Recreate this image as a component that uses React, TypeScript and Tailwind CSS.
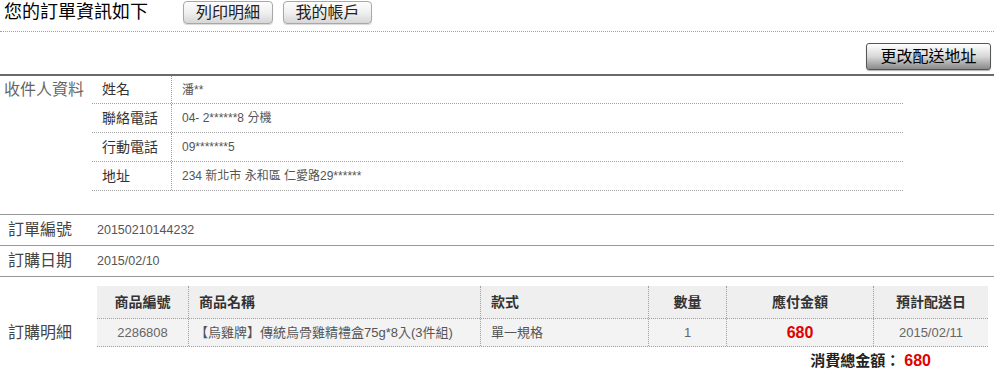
import React from "react";

const dotted = "border-dotted border-[#a0a0a0]";

function GrayButton({ children, className = "" }: { children: React.ReactNode; className?: string }) {
  return (
    <button
      className={
        "flex items-center justify-center rounded-[4px] border border-[#a8a8a8] bg-gradient-to-b from-[#fdfdfd] via-[#f0f0f0] to-[#d6d6d6] text-[#222] shadow-[0_1px_1px_rgba(0,0,0,0.15)] " +
        className
      }
    >
      {children}
    </button>
  );
}

const recipient = [
  ["姓名", "潘**"],
  ["聯絡電話", "04- 2******8 分機"],
  ["行動電話", "09*******5"],
  ["地址", "234 新北市 永和區 仁愛路29******"],
];

export default function App() {
  return (
    <div className="w-[994px] h-[375px] overflow-hidden bg-white font-['Liberation_Sans','Noto_Sans_CJK_TC',sans-serif]">
      {/* Header */}
      <div className={"flex items-start h-[32px] border-b " + dotted}>
        <h1 className="ml-[4px] h-[24px] leading-[24px] text-[18px] text-black font-normal whitespace-nowrap">
          您的訂單資訊如下
        </h1>
        <GrayButton className="ml-[35px] mt-[1px] w-[90px] h-[23px] text-[16px]">列印明細</GrayButton>
        <GrayButton className="ml-[10px] mt-[1px] w-[89px] h-[23px] text-[16px]">我的帳戶</GrayButton>
      </div>

      {/* Change address */}
      <div className="flex justify-end items-start h-[44px] pt-[11px] pr-[3px] border-b-2 border-[#6a6a6a]">
        <button className="flex items-center justify-center w-[125px] h-[27px] rounded-[3px] border border-[#555] bg-gradient-to-b from-[#ffffff] via-[#d8d8d8] to-[#8a8a8a] text-[16px] text-black shadow-[0_1px_1px_rgba(0,0,0,0.3)]">
          更改配送地址
        </button>
      </div>

      {/* Recipient */}
      <div className="flex">
        <div className="w-[92px] pl-[4px] pt-[4px] text-[16px] leading-[20px] text-[#666]">收件人資料</div>
        <div className="w-[811px]">
          {recipient.map(([k, v], i) => (
            <div key={k} className={"flex border-b " + dotted + (i === 0 ? " h-[28px]" : " h-[29px]")}>
              <div className={"w-[80px] pl-[10px] flex items-center text-[14px] text-[#333] border-r " + dotted}>{k}</div>
              <div className="pl-[10px] flex items-center text-[12px] text-[#555]">{v}</div>
            </div>
          ))}
        </div>
      </div>

      {/* Order no / date */}
      <div className="mt-[23px]">
        <div className="flex items-center h-[31px] border-t border-[#999]">
          <div className="w-[97px] pl-[8px] text-[16px] text-[#444]">訂單編號</div>
          <div className="text-[12.5px] text-[#555]">20150210144232</div>
        </div>
        <div className="flex items-center h-[31px] border-t border-[#999]">
          <div className="w-[97px] pl-[8px] text-[16px] text-[#444]">訂購日期</div>
          <div className="text-[12.5px] text-[#555]">2015/02/10</div>
        </div>
      </div>

      {/* Details */}
      <div className="flex border-t border-[#999] pt-[9px]">
        <div className="w-[97px] pl-[8px] mt-[35px] h-[24px] leading-[24px] text-[16px] text-[#444]">訂購明細</div>
        <div className="w-[891px]">
          <div className={"grid grid-cols-[91px_292px_168px_78px_147px_115px] h-[33px] bg-[#efefef] border-b text-[14px] font-bold text-[#333] " + dotted}>
            <div className="flex items-center justify-center">商品編號</div>
            <div className={"flex items-center pl-[10px] border-l " + dotted}>商品名稱</div>
            <div className={"flex items-center pl-[10px] border-l " + dotted}>款式</div>
            <div className={"flex items-center justify-center border-l " + dotted}>數量</div>
            <div className={"flex items-center justify-center border-l " + dotted}>應付金額</div>
            <div className={"flex items-center justify-center border-l " + dotted}>預計配送日</div>
          </div>
          <div className={"grid grid-cols-[91px_292px_168px_78px_147px_115px] h-[28px] bg-[#f3f3f3] border-b text-[13px] text-[#666] " + dotted}>
            <div className="flex items-center justify-center">2286808</div>
            <div className={"flex items-center pl-[6px] border-l text-[#555] " + dotted}>【烏雞牌】傳統烏骨雞精禮盒75g*8入(3件組)</div>
            <div className={"flex items-center pl-[10px] border-l text-[#555] " + dotted}>單一規格</div>
            <div className={"flex items-center justify-center border-l " + dotted}>1</div>
            <div className={"flex items-center justify-center border-l text-[16px] font-bold text-[#e00000] " + dotted}>680</div>
            <div className={"flex items-center justify-center border-l " + dotted}>2015/02/11</div>
          </div>
        </div>
      </div>

      {/* Total */}
      <div className="flex justify-end items-center h-[28px] pr-[63px]">
        <span className="text-[15px] font-bold text-[#222]">消費總金額：</span>
        <span className="ml-[4px] text-[16px] font-bold text-[#e00000]">680</span>
      </div>
    </div>
  );
}
